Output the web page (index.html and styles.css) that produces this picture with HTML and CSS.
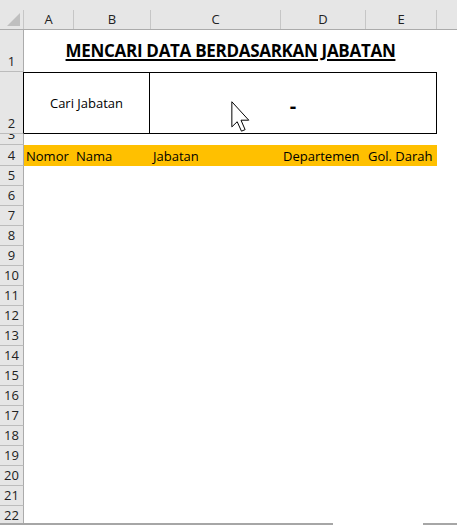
FILE: index.html
```html
<!DOCTYPE html>
<html>
<head>
<meta charset="utf-8">
<link rel="stylesheet" href="styles.css">
</head>
<body>
<div class="sheet">
  <div class="colhead">
    <div class="corner"><svg width="23" height="19" viewBox="0 0 23 19"><polygon points="20,3 20,16 7,16" fill="#bfbfbf"/></svg></div>
    <div class="ch">A</div>
    <div class="ch">B</div>
    <div class="ch">C</div>
    <div class="ch">D</div>
    <div class="ch">E</div>
    <div class="ch"></div>
  </div>
  <div class="grid">
    <div class="row r1">
      <div class="rh">1</div>
      <div class="cells title-cells"><div class="title">MENCARI DATA BERDASARKAN JABATAN</div></div>
    </div>
    <div class="row r2">
      <div class="rh rh-box">2</div>
      <div class="cells">
        <div class="box">
          <div class="box-label">Cari Jabatan</div>
          <div class="box-value"><span class="dash">-</span></div>
          <svg class="pointer" width="20" height="32" viewBox="0 0 13 21"><path d="M0.5 0.5 V17 L4 13.6 L6.8 19.8 L9.2 18.8 L6.5 12.6 L11.6 12.6 Z" fill="#fff" stroke="#000" stroke-width="0.65" stroke-linejoin="miter"/></svg>
        </div>
      </div>
    </div>
    <div class="row r3"><div class="rh">3</div><div class="cells"></div></div>
    <div class="row r4">
      <div class="rh">4</div>
      <div class="cells">
        <div class="hdr">
          <div class="hc">Nomor</div>
          <div class="hc">Nama</div>
          <div class="hc">Jabatan</div>
          <div class="hc">Departemen</div>
          <div class="hc">Gol. Darah</div>
        </div>
      </div>
    </div>
    <div class="row"><div class="rh">5</div><div class="cells"></div></div>
    <div class="row"><div class="rh">6</div><div class="cells"></div></div>
    <div class="row"><div class="rh">7</div><div class="cells"></div></div>
    <div class="row"><div class="rh">8</div><div class="cells"></div></div>
    <div class="row"><div class="rh">9</div><div class="cells"></div></div>
    <div class="row"><div class="rh">10</div><div class="cells"></div></div>
    <div class="row"><div class="rh">11</div><div class="cells"></div></div>
    <div class="row"><div class="rh">12</div><div class="cells"></div></div>
    <div class="row"><div class="rh">13</div><div class="cells"></div></div>
    <div class="row"><div class="rh">14</div><div class="cells"></div></div>
    <div class="row"><div class="rh">15</div><div class="cells"></div></div>
    <div class="row"><div class="rh">16</div><div class="cells"></div></div>
    <div class="row"><div class="rh">17</div><div class="cells"></div></div>
    <div class="row"><div class="rh">18</div><div class="cells"></div></div>
    <div class="row"><div class="rh">19</div><div class="cells"></div></div>
    <div class="row"><div class="rh">20</div><div class="cells"></div></div>
    <div class="row"><div class="rh">21</div><div class="cells"></div></div>
    <div class="row"><div class="rh">22</div><div class="cells"></div></div>
  </div>
  <div class="foot">
    <div class="seg seg-left"></div>
    <div class="gap"></div>
    <div class="seg seg-right"></div>
  </div>
</div>
</body>
</html>
```
FILE: styles.css
```css
* { box-sizing: border-box; margin: 0; padding: 0; }
html, body { width: 457px; height: 525px; overflow: hidden; background: #fff; }
body {
  font-family: "Open Sans", "Liberation Sans", sans-serif;
  font-size: 13px;
  color: #000;
}
.sheet { display: flex; flex-direction: column; height: 525px; }
.colhead {
  display: grid;
  grid-template-columns: 23px 50px 77px 130px 85px 71px 21px;
  height: 30px;
  padding-top: 10px;
  background: #e6e6e6;
  border-bottom: 1px solid #ababab;
  flex: none;
}
.corner { line-height: 0; }
.ch {
  border-left: 1px solid #c6c6c6;
  display: flex;
  align-items: center;
  justify-content: center;
  color: #222;
  line-height: 1;
}
.grid { height: 493px; overflow: hidden; flex: none; }
.row { display: flex; height: 20px; }
.rh {
  width: 24px;
  flex: none;
  background: #e6e6e6;
  border-right: 1px solid #ababab;
  border-bottom: 1px solid #bcbcbc;
  display: flex;
  align-items: flex-end;
  justify-content: center;
  padding-bottom: 2px;
  color: #222;
  line-height: 15px;
  overflow: hidden;
}
.cells { flex: 1; display: flex; }
.r1 { height: 42px; }
.r2 { height: 62px; }
.r3 { height: 11px; }
.r4 { height: 21px; }
.rh-box { border-right-color: #000; }
.r4 .rh { height: 21px; }

.title-cells { align-items: flex-end; }
.title {
  width: 413px;
  text-align: center;
  font-weight: bold;
  font-size: 17px;
  letter-spacing: -0.3px;
  line-height: 20px;
  padding-bottom: 11px;
  text-decoration: underline;
  text-decoration-thickness: 1.5px;
  text-underline-offset: 2px;
}

.box {
  position: relative;
  width: 413px;
  height: 62px;
  border: 1px solid #000;
  border-left: none;
  display: grid;
  grid-template-columns: 126px 1fr;
}
.box-label {
  border-right: 1px solid #000;
  display: flex;
  align-items: center;
  justify-content: center;
}
.box-value {
  display: flex;
  align-items: center;
  justify-content: center;
  padding-top: 6px;
}
.dash { font-weight: bold; font-size: 20px; line-height: 1; }
.pointer { position: absolute; left: 207px; top: 28px; }

.hdr {
  display: grid;
  grid-template-columns: 50px 77px 130px 85px 71px;
  width: 413px;
  height: 21px;
  background: #ffc000;
}
.hc {
  padding-left: 2px;
  display: flex;
  align-items: flex-end;
  padding-bottom: 2px;
  line-height: 16px;
  white-space: nowrap;
}

.foot { display: flex; height: 2px; flex: none; }
.seg { background: #a6a6a6; }
.seg-left { width: 333px; }
.gap { width: 90px; }
.seg-right { flex: 1; }
```
